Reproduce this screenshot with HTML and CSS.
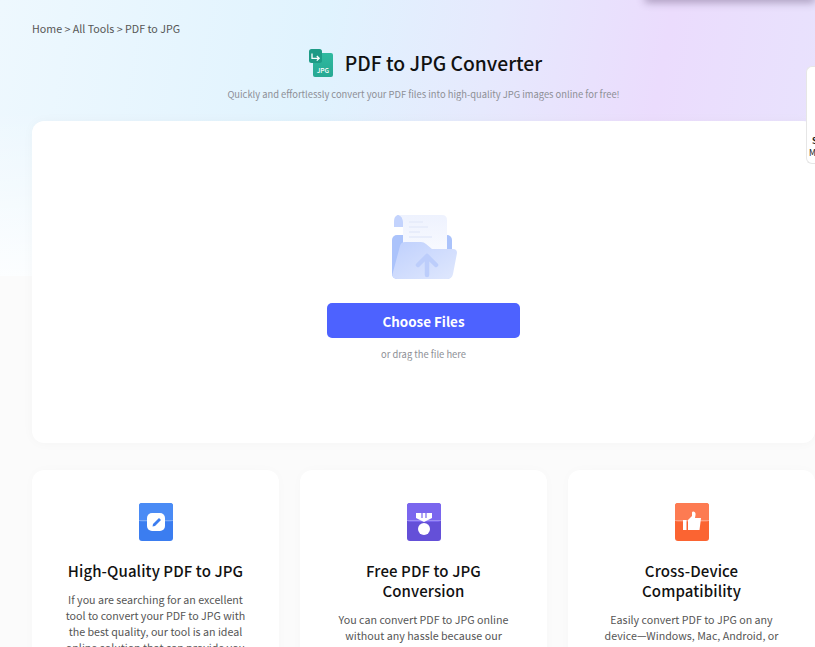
FILE: index.html
```html
<!DOCTYPE html>
<html lang="en">
<head>
    <meta charset="UTF-8">
    <meta name="viewport" content="width=device-width, initial-scale=1.0">
    <title>PDF to JPG Converter</title>
    <link rel="stylesheet" href="styles.css">
</head>
<body>
    <div class="top-shadow"></div>

    <!-- side widget, mostly off screen -->
    <div class="side-widget">
        <span class="side-bold">S</span>
        <span>M</span>
    </div>

    <div class="hero-bg"></div>

    <main class="page">
        <div class="breadcrumb">Home &gt; All Tools &gt; PDF to JPG</div>

        <div class="title-row">
            <svg class="title-icon" viewBox="0 0 24 28" width="24" height="28">
                <defs>
                    <linearGradient id="jpgBody" x1="0" y1="0" x2="0" y2="1">
                        <stop offset="0" stop-color="#2fbaa0"/>
                        <stop offset="1" stop-color="#27a993"/>
                    </linearGradient>
                </defs>
                <rect x="4" y="4" width="20" height="24" rx="2" fill="url(#jpgBody)"/>
                <rect x="0" y="0" width="13" height="14" rx="2.500" fill="#1e9b86"/>
                <path d="M3 4.500V9.300H10M7.800 7 10.200 9.300 7.800 11.600" fill="none" stroke="#fff" stroke-width="1.300"/>
                <text x="7.800" y="23.500" class="title-icon-text">JPG</text>
            </svg>
            <h1>PDF to JPG Converter</h1>
        </div>
        <p class="subtitle">Quickly and effortlessly convert your PDF files into high-quality JPG images online for free!</p>

        <section class="upload-card">
            <svg class="folder-icon" viewBox="0 0 66 65" width="66" height="65">
                <defs>
                    <linearGradient id="paper" x1="0" y1="0" x2="0" y2="1">
                        <stop offset="0" stop-color="#eef2fe"/>
                        <stop offset="1" stop-color="#fcfdff"/>
                    </linearGradient>
                    <linearGradient id="front" x1="0" y1="0" x2="1" y2="1">
                        <stop offset="0" stop-color="#bfd0fd"/>
                        <stop offset="1" stop-color="#e0e8fd"/>
                    </linearGradient>
                </defs>
                <path d="M3 8C3 3 5 1 7.500 1S12 3 12 8V13H3Z" fill="#c3d3fd"/>
                <rect x="1" y="21" width="60" height="44" rx="5" fill="#abc3fb"/>
                <path d="M7.500 1H51Q56 1 56 6V50H12V8Q12 3 7.500 1Z" fill="url(#paper)"/>
                <g fill="#e8edfb">
                    <rect x="18" y="7" width="14" height="2"/>
                    <rect x="18" y="12" width="19" height="2"/>
                    <rect x="18" y="17" width="11" height="2"/>
                    <rect x="18" y="22" width="23" height="2"/>
                </g>
                <path d="M9 32Q10 28 14 28H30Q33 28 35 30L41 35H62Q66 35 66 39L62 60Q61 65 56 65H6Q1 65 1.500 60Z" fill="url(#front)"/>
                <path d="M36 61V43M27 51 36 42 45 51" fill="none" stroke="#bccdfb" stroke-width="4.500" stroke-linecap="round" stroke-linejoin="round"/>
            </svg>
            <button class="choose-btn" type="button">Choose Files</button>
            <p class="drag-hint">or drag the file here</p>
        </section>

        <section class="features">
            <article class="feature">
                <svg class="feature-icon" viewBox="0 0 34 38" width="34" height="38">
                    <rect width="34" height="38" rx="3" fill="#3b7df0"/>
                    <rect width="34" height="19" rx="3" fill="#4a8bf5"/>
                    <rect y="17" width="34" height="1" fill="#7aa9f8"/>
                    <rect x="8" y="10" width="18" height="18" rx="5" fill="#fff"/>
                    <path d="M13.500 23.500 14 21 20 15 22 17 16 23Z" fill="#3b7df0"/>
                </svg>
                <h2>High-Quality PDF to JPG</h2>
                <p>If you are searching for an excellent tool to convert your PDF to JPG with the best quality, our tool is an ideal online solution that can provide you</p>
            </article>
            <article class="feature">
                <svg class="feature-icon" viewBox="0 0 34 38" width="34" height="38">
                    <rect width="34" height="38" rx="3" fill="#6450d8"/>
                    <rect width="34" height="19" rx="3" fill="#7a66ee"/>
                    <rect y="17" width="34" height="1" fill="#9d8ef5"/>
                    <path d="M9 10H25V15L17 19 9 15Z" fill="#fff"/>
                    <path d="M15 10V15M19 10V15" stroke="#7a66ee" stroke-width="1.200"/>
                    <circle cx="17" cy="26" r="6" fill="#fff"/>
                </svg>
                <h2>Free PDF to JPG Conversion</h2>
                <p>You can convert PDF to JPG online without any hassle because our</p>
            </article>
            <article class="feature">
                <svg class="feature-icon" viewBox="0 0 34 38" width="34" height="38">
                    <rect width="34" height="38" rx="3" fill="#fb6432"/>
                    <rect width="34" height="19" rx="3" fill="#fd7b52"/>
                    <rect y="17" width="34" height="1" fill="#fda184"/>
                    <rect x="8" y="17" width="3.500" height="10" fill="#fff"/>
                    <path d="M13 17 17 13V9.500Q17 8.500 18.500 8.500 21 9 20.500 12L20 15H26L24.500 27H13Z" fill="#fff"/>
                </svg>
                <h2>Cross-Device Compatibility</h2>
                <p>Easily convert PDF to JPG on any device—Windows, Mac, Android, or</p>
            </article>
        </section>
    </main>
</body>
</html>
```

FILE: styles.css
```css
* { margin: 0; padding: 0; box-sizing: border-box; }
html, body { height: 647px; overflow: hidden; }
body {
    font-family: "Noto Sans CJK SC", "Noto Sans", sans-serif;
    background-color: #fbfbfb;
    color: #111;
    position: relative;
}
.hero-bg {
    position: absolute;
    top: 0;
    left: 0;
    right: 0;
    height: 276px;
    background:
        linear-gradient(to bottom, rgba(255, 255, 255, 0) 40%, rgba(255, 255, 255, 0.85) 100%),
        linear-gradient(100deg, #eef8fe 0%, #e0f3fe 38%, #e6e9fd 58%, #ebdcfd 78%, #e8e3fd 100%);
}
.top-shadow {
    position: absolute;
    top: -8px;
    left: 645px;
    width: 170px;
    height: 8px;
    box-shadow: 0 2px 8px rgba(70, 50, 90, 0.45);
    z-index: 2;
}
.side-widget {
    position: absolute;
    top: 66px;
    left: 806px;
    width: 9px;
    height: 98px;
    background: #fff;
    border: 1px solid #e6e6e6;
    border-right: none;
    border-radius: 6px 0 0 6px;
    z-index: 2;
    overflow: hidden;
    padding: 67px 0 0 2px;
    font-size: 8.500px;
    line-height: 12px;
    color: #222;
}
.side-widget span { display: block; }
.side-bold { font-weight: 700; margin-left: 3px; }
.page {
    position: relative;
    padding: 20px 0 0 32px;
}
.breadcrumb {
    font-size: 10.700px;
    line-height: 18px;
    color: #555;
}
.title-row {
    display: flex;
    justify-content: center;
    align-items: center;
    gap: 12px;
    margin-top: 7px;
    padding-left: 4px;
    height: 36px;
}
.title-icon { display: block; margin-top: -1px; }
.title-icon-text { font-size: 6.500px; font-weight: 500; fill: #fff; }
h1 { font-size: 19.300px; line-height: 30px; font-weight: 500; color: #111; }
.subtitle {
    margin-top: 5px;
    text-align: center;
    font-size: 9.400px;
    line-height: 16px;
    color: #8d8f96;
}
.upload-card {
    margin-top: 19px;
    height: 322px;
    background: #fff;
    border-radius: 12px;
    box-shadow: 0 0 12px rgba(0, 0, 0, 0.03);
    display: flex;
    flex-direction: column;
    align-items: center;
    padding-top: 93px;
}
.folder-icon { display: block; }
.choose-btn {
    margin-top: 24px;
    width: 193px;
    height: 35px;
    border: none;
    border-radius: 5px;
    background: #4d62ff;
    color: #fff;
    font-family: inherit;
    font-size: 13.400px;
    font-weight: 700;
}
.drag-hint {
    margin-top: 8px;
    font-size: 9.400px;
    line-height: 16px;
    color: #8d8f96;
}
.features {
    margin-top: 27px;
    display: grid;
    grid-template-columns: repeat(3, 247px);
    gap: 21px;
}
.feature {
    background: #fff;
    border-radius: 12px;
    box-shadow: 0 0 12px rgba(0, 0, 0, 0.02);
    height: 300px;
    padding: 33px 30px 0;
    text-align: center;
}
.feature-icon { display: block; margin: 0 auto; }
.feature h2 {
    margin-top: 20px;
    font-size: 15px;
    line-height: 20px;
    font-weight: 500;
    letter-spacing: 0.100px;
    color: #111;
}
.feature p {
    margin-top: 11px;
    font-size: 10.700px;
    line-height: 16px;
    color: #555;
}
```
